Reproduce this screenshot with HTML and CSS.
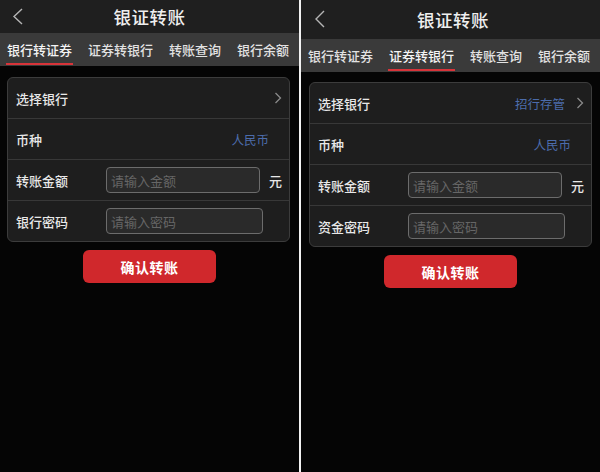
FILE: index.html
```html
<!DOCTYPE html>
<html lang="zh-CN">
<head>
<meta charset="utf-8">
<title>银证转账</title>
<link rel="stylesheet" href="styles.css">
</head>
<body>
<div class="screens">
  <section class="panel">
    <header class="topbar">
      <svg class="back" width="12" height="17" viewBox="0 0 12 17"><polyline points="10,1 2,8.5 10,16" fill="none" stroke="#b5b5b5" stroke-width="1.4"/></svg>
      <h1 class="title">银证转账</h1>
    </header>
    <nav class="tabs">
      <span class="tab active">银行转证券</span>
      <span class="tab">证券转银行</span>
      <span class="tab">转账查询</span>
      <span class="tab">银行余额</span>
    </nav>
    <div class="card">
      <div class="row">
        <span class="label">选择银行</span>
        <span class="spacer"></span>
        <svg class="chev" width="8" height="12" viewBox="0 0 8 12"><polyline points="1.5,1 6.5,6 1.5,11" fill="none" stroke="#8a8a8a" stroke-width="1.3"/></svg>
      </div>
      <div class="row">
        <span class="label">币种</span>
        <span class="spacer"></span>
        <span class="value">人民币</span>
      </div>
      <div class="row">
        <span class="label">转账金额</span>
        <span class="input">请输入金额</span>
        <span class="unit">元</span>
      </div>
      <div class="row">
        <span class="label">银行密码</span>
        <span class="input">请输入密码</span>
      </div>
    </div>
    <div class="btn-wrap"><button class="btn">确认转账</button></div>
  </section>
  <section class="panel panel-b">
    <header class="topbar">
      <svg class="back" width="12" height="18" viewBox="0 0 12 18"><polyline points="10,1 2,9 10,17" fill="none" stroke="#b5b5b5" stroke-width="1.4"/></svg>
      <h1 class="title">银证转账</h1>
    </header>
    <nav class="tabs">
      <span class="tab">银行转证券</span>
      <span class="tab active">证券转银行</span>
      <span class="tab">转账查询</span>
      <span class="tab">银行余额</span>
    </nav>
    <div class="card">
      <div class="row">
        <span class="label">选择银行</span>
        <span class="spacer"></span>
        <span class="value value-bank">招行存管</span>
        <svg class="chev" width="8" height="12" viewBox="0 0 8 12"><polyline points="1.5,1 6.5,6 1.5,11" fill="none" stroke="#8a8a8a" stroke-width="1.3"/></svg>
      </div>
      <div class="row">
        <span class="label">币种</span>
        <span class="spacer"></span>
        <span class="value">人民币</span>
      </div>
      <div class="row">
        <span class="label">转账金额</span>
        <span class="input">请输入金额</span>
        <span class="unit">元</span>
      </div>
      <div class="row">
        <span class="label">资金密码</span>
        <span class="input">请输入密码</span>
      </div>
    </div>
    <div class="btn-wrap"><button class="btn">确认转账</button></div>
  </section>
</div>
</body>
</html>
```
FILE: styles.css
```css
* { box-sizing: border-box; }
html, body { margin: 0; padding: 0; }
body {
  width: 600px;
  height: 472px;
  background: #f2f2f2;
  font-family: "Noto Sans CJK SC", "Noto Sans", sans-serif;
  overflow: hidden;
}
.screens {
  display: flex;
  gap: 2px;
  height: 472px;
}
.panel {
  width: 299px;
  height: 472px;
  background: #050505;
  display: flex;
  flex-direction: column;
}
.topbar {
  height: 33px;
  background: #1f1f1f;
  display: flex;
  align-items: center;
  position: relative;
  padding-left: 12px;
}
.panel-b .topbar { height: 39px; padding-left: 13px; }
.back { display: block; margin-top: -1px; }
.title {
  position: absolute;
  left: 0;
  right: 0;
  top: 0;
  bottom: 0;
  margin: 0;
  display: flex;
  align-items: center;
  justify-content: center;
  font-size: 17.5px;
  font-weight: 500;
  color: #efefef;
  letter-spacing: 0.5px;
  pointer-events: none;
}
.panel-b .title { padding-left: 5px; }
.tabs {
  height: 33px;
  background: #3a3a3a;
  display: flex;
  gap: 14px;
  padding-left: 6px;
}
.tab {
  height: 32px;
  padding: 3px 1px 0;
  display: flex;
  align-items: center;
  font-size: 13px;
  font-weight: 500;
  color: #e2e2e2;
  border-bottom: 2px solid transparent;
  white-space: nowrap;
}
.tab.active {
  color: #f4f4f4;
  border-bottom-color: #d8343a;
}
.card {
  margin: 11px 9px 0 7px;
  background: #1e1e1e;
  border: 1px solid #3c3c3c;
  border-radius: 6px;
}
.panel-b .card { margin: 10px 8px 0 8px; }
.row {
  height: 41px;
  display: flex;
  align-items: center;
  padding: 0 7px 0 8px;
  border-top: 1px solid #383838;
}
.row:first-child { border-top: none; height: 40px; }
.label {
  width: 90px;
  flex: none;
  font-size: 13px;
  font-weight: 500;
  color: #e8e8e8;
}
.spacer { flex: 1; }
.value {
  font-size: 12.5px;
  color: #4c6cab;
  margin-right: 13px;
}
.value-bank { margin-right: 11px; }
.chev { display: block; }
.input {
  width: 157px;
  height: 26px;
  border: 1px solid #6c6c6c;
  border-radius: 4px;
  background: #2a2a2a;
  font-size: 13px;
  color: #666;
  display: flex;
  align-items: center;
  padding-left: 4px;
}
.unit {
  margin-left: 9px;
  font-size: 13px;
  font-weight: 500;
  color: #e8e8e8;
}
.btn-wrap {
  display: flex;
  justify-content: center;
  margin-top: 8px;
}
.btn {
  width: 133px;
  height: 33px;
  border: none;
  border-radius: 6px;
  background: #d0282c;
  color: #fff;
  font-family: inherit;
  font-size: 14px;
  font-weight: 700;
  letter-spacing: 0.5px;
  padding: 0;
}
```
